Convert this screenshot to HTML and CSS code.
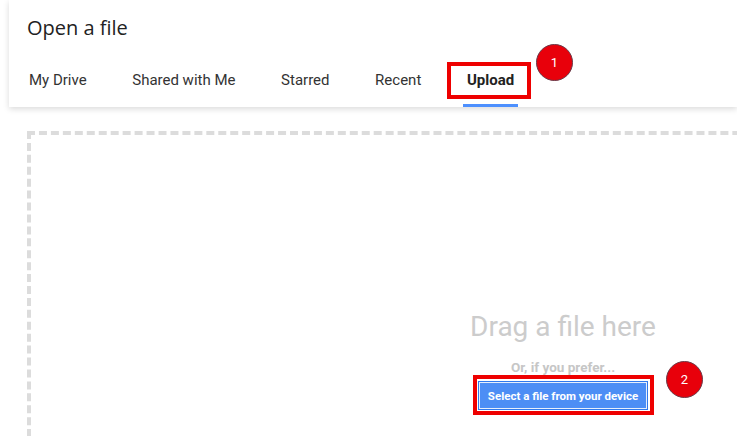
FILE: index.html
```html
<!DOCTYPE html>
<html lang="en">
<head>
  <meta charset="UTF-8" />
  <title>Open a file</title>
  <link rel="stylesheet" href="styles.css">
</head>
<body>

<div class="picker">
  <div class="header">
    <div class="title">Open a file</div>

    <div class="tabs">
      <div class="tab">My Drive</div>
      <div class="tab">Shared with Me</div>
      <div class="tab">Starred</div>
      <div class="tab">Recent</div>
      <div class="tab active">
        Upload
        <span class="mark mark-tab"></span>
        <span class="badge badge-tab">1</span>
      </div>
    </div>
  </div>

  <!-- Upload area -->
  <div class="dropzone">
    <div class="drag-text">Drag a file here</div>
    <div class="prefer-text">Or, if you prefer...</div>
    <div class="select-wrap">
      <button class="select-button">Select a file from your device</button>
      <span class="mark mark-button"></span>
      <span class="badge badge-button">2</span>
    </div>
  </div>
</div>

</body>
</html>
```

FILE: styles.css
```css
body {
  margin: 0;
  padding: 0;
  background: #fff;
  font-family: Roboto, "Liberation Sans", sans-serif;
  overflow: hidden;
}

.picker {
  width: 737px;
  height: 436px;
  overflow: hidden;
}

.header {
  margin-left: 9px;
  padding-top: 14px;
  background: #fff;
  box-shadow: 0 2px 6px rgba(0, 0, 0, 0.15);
  position: relative;
  z-index: 1;
}

.title {
  padding-left: 18px;
  font-family: "Open Sans", "Noto Sans", sans-serif;
  font-size: 20px;
  line-height: 28px;
  color: #222;
}

.tabs {
  display: flex;
  gap: 37.6px;
  padding-left: 16px;
  margin-top: 28px;
}

.tab {
  position: relative;
  padding: 0 4px 14px;
  font-size: 15px;
  line-height: 20px;
  color: #333;
  border-bottom: 3px solid transparent;
  white-space: nowrap;
}

.tab.active {
  font-weight: bold;
  color: #222;
  border-bottom-color: #4d90fe;
}

/* Annotation marks */
.mark {
  position: absolute;
  border: 4px solid #ee0000;
  pointer-events: none;
}

.mark-tab {
  left: -16px;
  right: -13px;
  top: -8px;
  bottom: 5px;
}

.badge {
  position: absolute;
  width: 35px;
  height: 35px;
  border-radius: 50%;
  background: #e8000b;
  border: 1px solid #6a3a48;
  color: #fff;
  font-size: 13px;
  font-weight: normal;
  display: flex;
  justify-content: center;
  align-items: center;
}

.badge-tab {
  left: 73px;
  top: -26px;
}

.dropzone {
  margin: 24px 0 0 27px;
  width: 1064px;
  height: 600px;
  border: 4px dashed #dcdcdc;
  padding-top: 175px;
  text-align: center;
  box-sizing: content-box;
}

.drag-text {
  font-size: 28px;
  line-height: 34px;
  color: #cccccc;
}

.prefer-text {
  margin-top: 15px;
  font-size: 13.5px;
  line-height: 16px;
  font-weight: bold;
  color: #c6c6c6;
}

.select-wrap {
  position: relative;
  display: inline-block;
  margin-top: 6px;
}

.select-button {
  display: block;
  width: 170px;
  height: 29px;
  padding: 0;
  background: #4d8ef5;
  border: 1px solid #3079ed;
  box-shadow: inset 0 0 0 1px #e8effc;
  color: #fff;
  font-family: Roboto, "Liberation Sans", sans-serif;
  font-size: 11.5px;
  font-weight: bold;
  cursor: pointer;
}

.mark-button {
  left: -5px;
  right: -6px;
  top: -6px;
  bottom: -5px;
}

.badge-button {
  left: 188px;
  top: -20px;
}
```
